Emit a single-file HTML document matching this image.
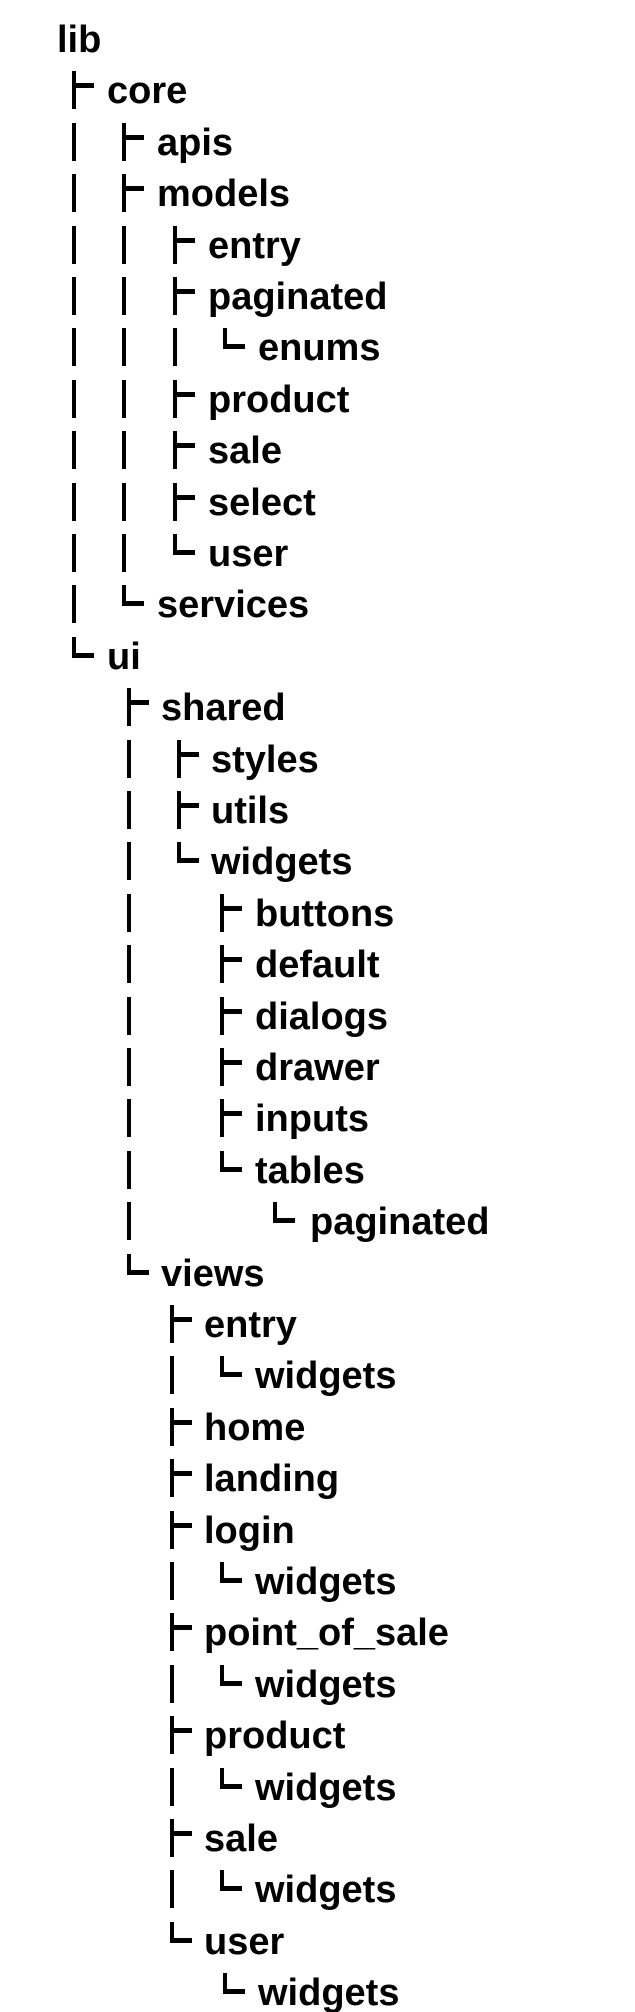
<!DOCTYPE html>
<html><head><meta charset="utf-8"><style>
html,body{margin:0;padding:0;background:#fff;width:635px;height:2012px;overflow:hidden;position:relative}
.l{position:absolute;left:0;height:40px;width:635px}
.t{position:absolute;top:1px;font:bold 38px/38px "Liberation Sans",Arial,sans-serif;color:#000;white-space:nowrap}
.v{position:absolute;top:0;width:4px;height:38px;background:#000}
.T{position:absolute;top:0;width:22px;height:38px}
.T:before{content:"";position:absolute;left:0;top:0;width:4px;height:38px;background:#000}
.T:after{content:"";position:absolute;left:0;top:12px;width:22px;height:5px;background:#000}
.L{position:absolute;top:0;width:22px;height:21px}
.L:before{content:"";position:absolute;left:0;top:0;width:4px;height:21px;background:#000}
.L:after{content:"";position:absolute;left:0;top:16px;width:22px;height:5px;background:#000}
</style></head><body>
<div class="l" style="top:20px"><span class="t" style="left:57px">lib</span></div>
<div class="l" style="top:71px"><i class="T" style="left:72px"></i><span class="t" style="left:107px">core</span></div>
<div class="l" style="top:123px"><i class="v" style="left:72px"></i><i class="T" style="left:122px"></i><span class="t" style="left:157px">apis</span></div>
<div class="l" style="top:174px"><i class="v" style="left:72px"></i><i class="T" style="left:122px"></i><span class="t" style="left:157px">models</span></div>
<div class="l" style="top:226px"><i class="v" style="left:72px"></i><i class="v" style="left:122px"></i><i class="T" style="left:173px"></i><span class="t" style="left:208px">entry</span></div>
<div class="l" style="top:277px"><i class="v" style="left:72px"></i><i class="v" style="left:122px"></i><i class="T" style="left:173px"></i><span class="t" style="left:208px">paginated</span></div>
<div class="l" style="top:328px"><i class="v" style="left:72px"></i><i class="v" style="left:122px"></i><i class="v" style="left:173px"></i><i class="L" style="left:223px"></i><span class="t" style="left:258px">enums</span></div>
<div class="l" style="top:380px"><i class="v" style="left:72px"></i><i class="v" style="left:122px"></i><i class="T" style="left:173px"></i><span class="t" style="left:208px">product</span></div>
<div class="l" style="top:431px"><i class="v" style="left:72px"></i><i class="v" style="left:122px"></i><i class="T" style="left:173px"></i><span class="t" style="left:208px">sale</span></div>
<div class="l" style="top:483px"><i class="v" style="left:72px"></i><i class="v" style="left:122px"></i><i class="T" style="left:173px"></i><span class="t" style="left:208px">select</span></div>
<div class="l" style="top:534px"><i class="v" style="left:72px"></i><i class="v" style="left:122px"></i><i class="L" style="left:173px"></i><span class="t" style="left:208px">user</span></div>
<div class="l" style="top:585px"><i class="v" style="left:72px"></i><i class="L" style="left:122px"></i><span class="t" style="left:157px">services</span></div>
<div class="l" style="top:637px"><i class="L" style="left:72px"></i><span class="t" style="left:107px">ui</span></div>
<div class="l" style="top:688px"><i class="T" style="left:127px"></i><span class="t" style="left:161px">shared</span></div>
<div class="l" style="top:740px"><i class="v" style="left:127px"></i><i class="T" style="left:177px"></i><span class="t" style="left:211px">styles</span></div>
<div class="l" style="top:791px"><i class="v" style="left:127px"></i><i class="T" style="left:177px"></i><span class="t" style="left:211px">utils</span></div>
<div class="l" style="top:842px"><i class="v" style="left:127px"></i><i class="L" style="left:177px"></i><span class="t" style="left:211px">widgets</span></div>
<div class="l" style="top:894px"><i class="v" style="left:127px"></i><i class="T" style="left:220px"></i><span class="t" style="left:255px">buttons</span></div>
<div class="l" style="top:945px"><i class="v" style="left:127px"></i><i class="T" style="left:220px"></i><span class="t" style="left:255px">default</span></div>
<div class="l" style="top:997px"><i class="v" style="left:127px"></i><i class="T" style="left:220px"></i><span class="t" style="left:255px">dialogs</span></div>
<div class="l" style="top:1048px"><i class="v" style="left:127px"></i><i class="T" style="left:220px"></i><span class="t" style="left:255px">drawer</span></div>
<div class="l" style="top:1099px"><i class="v" style="left:127px"></i><i class="T" style="left:220px"></i><span class="t" style="left:255px">inputs</span></div>
<div class="l" style="top:1151px"><i class="v" style="left:127px"></i><i class="L" style="left:220px"></i><span class="t" style="left:255px">tables</span></div>
<div class="l" style="top:1202px"><i class="v" style="left:127px"></i><i class="L" style="left:273px"></i><span class="t" style="left:310px">paginated</span></div>
<div class="l" style="top:1254px"><i class="L" style="left:127px"></i><span class="t" style="left:161px">views</span></div>
<div class="l" style="top:1305px"><i class="T" style="left:170px"></i><span class="t" style="left:204px">entry</span></div>
<div class="l" style="top:1356px"><i class="v" style="left:170px"></i><i class="L" style="left:220px"></i><span class="t" style="left:255px">widgets</span></div>
<div class="l" style="top:1408px"><i class="T" style="left:170px"></i><span class="t" style="left:204px">home</span></div>
<div class="l" style="top:1459px"><i class="T" style="left:170px"></i><span class="t" style="left:204px">landing</span></div>
<div class="l" style="top:1511px"><i class="T" style="left:170px"></i><span class="t" style="left:204px">login</span></div>
<div class="l" style="top:1562px"><i class="v" style="left:170px"></i><i class="L" style="left:220px"></i><span class="t" style="left:255px">widgets</span></div>
<div class="l" style="top:1613px"><i class="T" style="left:170px"></i><span class="t" style="left:204px">point_of_sale</span></div>
<div class="l" style="top:1665px"><i class="v" style="left:170px"></i><i class="L" style="left:220px"></i><span class="t" style="left:255px">widgets</span></div>
<div class="l" style="top:1716px"><i class="T" style="left:170px"></i><span class="t" style="left:204px">product</span></div>
<div class="l" style="top:1768px"><i class="v" style="left:170px"></i><i class="L" style="left:220px"></i><span class="t" style="left:255px">widgets</span></div>
<div class="l" style="top:1819px"><i class="T" style="left:170px"></i><span class="t" style="left:204px">sale</span></div>
<div class="l" style="top:1870px"><i class="v" style="left:170px"></i><i class="L" style="left:220px"></i><span class="t" style="left:255px">widgets</span></div>
<div class="l" style="top:1922px"><i class="L" style="left:170px"></i><span class="t" style="left:204px">user</span></div>
<div class="l" style="top:1973px"><i class="L" style="left:223px"></i><span class="t" style="left:258px">widgets</span></div>
</body></html>
